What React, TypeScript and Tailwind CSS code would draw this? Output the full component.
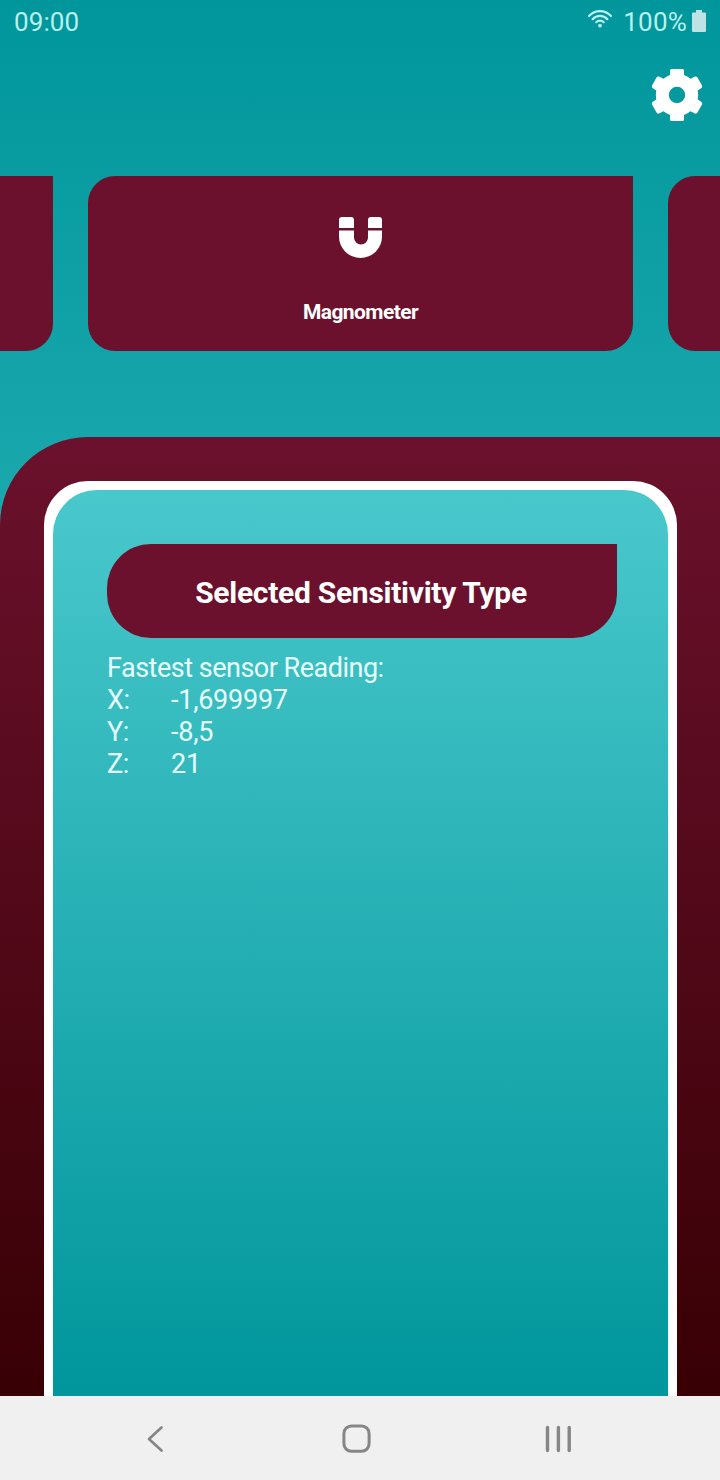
import React from "react";

function StatusBar() {
  return (
    <header className="flex h-11 items-center justify-between pl-[14px] pr-[14px] text-[26px] leading-none text-[#b9f0f1]">
      <span className="tracking-[0.1px]">09:00</span>
      <div className="flex items-center">
        <svg className="mr-[11px] -mt-[7px] h-[18px] w-6" viewBox="0 0 24 18" fill="none" stroke="currentColor" strokeWidth="2.200" strokeLinecap="round">
          <path d="M1 6C7-.6 17-.6 23 6" />
          <path d="M4.600 9.200c4.200-4.400 10.600-4.400 14.800 0" />
          <path d="M8.200 12.200c2.200-2.200 5.400-2.200 7.600 0" />
          <circle cx="12" cy="15.600" r="1.900" fill="currentColor" stroke="none" />
        </svg>
        <span className="tracking-[0.200px]">100%</span>
        <svg className="ml-[5px] -mt-[3px] h-[22px] w-[14px]" viewBox="0 0 14 22" fill="#bfe3e5">
          <path d="M4 0h6v2.500h3q1 0 1 1V21q0 1-1 1H1q-1 0-1-1V3.500q0-1 1-1h3z" />
        </svg>
      </div>
    </header>
  );
}

function GearIcon() {
  return (
    <svg className="h-[52px] w-[52px]" viewBox="-26 -26 52 52" fill="white">
      <path
        fillRule="evenodd"
        d="M-5.500-26H5.500Q7-26 7-24.500V-20Q11-18.500 13.500-16.300L18-18.500Q19.500-19 20.500-17.500L25-9.500Q25.500-8 24.500-7L20.700-4.500Q21.700 0 20.700 4.500L24.500 7Q25.500 8 25 9.500L20.500 17.500Q19.500 19 18 18.500L13.500 16.300Q11 18.500 7 20V24.500Q7 26 5.500 26H-5.500Q-7 26-7 24.500V20Q-11 18.500-13.500 16.300L-18 18.500Q-19.500 19-20.500 17.500L-25 9.500Q-25.500 8-24.500 7L-20.700 4.500Q-21.700 0-20.700-4.500L-24.500-7Q-25.500-8-25-9.500L-20.500-17.500Q-19.500-19-18-18.500L-13.500-16.300Q-11-18.500-7-20V-24.500Q-7-26-5.500-26ZM8.200 0A8.200 8.200 0 1 0-8.200 0A8.200 8.200 0 1 0 8.200 0Z"
      />
    </svg>
  );
}

function MagnetIcon() {
  return (
    <svg className="ml-[2px] h-[42px] w-[44px]" viewBox="0 0 44 42" fill="white">
      <path d="M0 11V3Q0 0 3 0H12Q15 0 15 3V11ZM29 11V3Q29 0 32 0H40Q43 0 43 3V11Z" />
      <path d="M0 13.500H15V20.500A7 7 0 0 0 29 20.500V13.500H43V19.500A21.500 21.500 0 0 1 0 19.500Z" />
    </svg>
  );
}

function SensorCard({ children }: { children?: React.ReactNode }) {
  return (
    <article className="flex h-[175px] w-[545px] shrink-0 flex-col items-center rounded-[27px] rounded-tr-none bg-[#6b112d] pt-[41px]">
      {children}
    </article>
  );
}

const readings = [
  ["X:", "-1,699997"],
  ["Y:", "-8,5"],
  ["Z:", "21"],
];

function NavigationBar() {
  return (
    <nav className="flex h-[84px] items-center bg-[#f0f0f0] pl-[146px] pt-[2px] text-[#868686]">
      <svg className="h-7 w-[18px]" viewBox="0 0 18 28" fill="none" stroke="currentColor" strokeWidth="2.700" strokeLinecap="round" strokeLinejoin="round">
        <path d="M15.500 2.500L3 14L15.500 25.500" />
      </svg>
      <svg className="ml-[178px] h-[30px] w-[30px]" viewBox="0 0 30 30" fill="none" stroke="currentColor" strokeWidth="3">
        <rect x="1.900" y="1.900" width="25.200" height="25.400" rx="7.500" />
      </svg>
      <svg className="ml-[172px] h-7 w-7" viewBox="0 0 28 28" fill="none" stroke="currentColor" strokeWidth="3.400" strokeLinecap="round">
        <path d="M3.500 2.500V25.500M14.400 2.500V25.500M25.200 2.500V25.500" />
      </svg>
    </nav>
  );
}

export default function App() {
  return (
    <div className="flex h-[1480px] w-[720px] flex-col overflow-hidden font-['Roboto',sans-serif]">
      <main className="flex h-[1396px] flex-col bg-linear-to-b/srgb from-[#00969b] to-[#48c8cc]">
        <StatusBar />
        <div className="flex h-[132px] justify-end pr-[17px] pt-[25px]">
          <GearIcon />
        </div>
        <section className="flex h-[175px] justify-center gap-[35px]">
          <SensorCard />
          <SensorCard>
            <MagnetIcon />
            <h2 className="ml-px mt-[41px] text-[21px] font-bold leading-6 tracking-[-0.580px] text-white">Magnometer</h2>
          </SensorCard>
          <SensorCard />
        </section>
        <section className="mt-[86px] flex flex-1 rounded-tl-[88px] bg-linear-to-b/srgb from-[#6b112d] to-[#380004] px-11 pr-[43px] pt-11">
          <div className="flex flex-1 rounded-t-[44px] bg-white px-[9px] pt-[9px]">
            <div className="flex-1 rounded-t-[44px] bg-linear-to-b/srgb from-[#49c8cc] to-[#00969b] pl-[54px] pr-[51px] pt-[54px]">
              <h1 className="flex h-[94px] items-center justify-center rounded-[44px] rounded-tr-none bg-[#6b112d] pr-[2px] pt-[3px] text-[30px] font-bold tracking-[-0.280px] text-white">
                Selected Sensitivity Type
              </h1>
              <div className="mt-[14px] text-[27px] leading-8 text-[#e8ffff]">
                <p className="tracking-[-0.500px]">Fastest sensor Reading:</p>
                {readings.map(([axis, value]) => (
                  <p key={axis} className="flex">
                    <span className="w-16 tracking-[-0.400px]">{axis}</span>
                    <span className="tracking-[-0.250px]">{value}</span>
                  </p>
                ))}
              </div>
            </div>
          </div>
        </section>
      </main>
      <NavigationBar />
    </div>
  );
}
